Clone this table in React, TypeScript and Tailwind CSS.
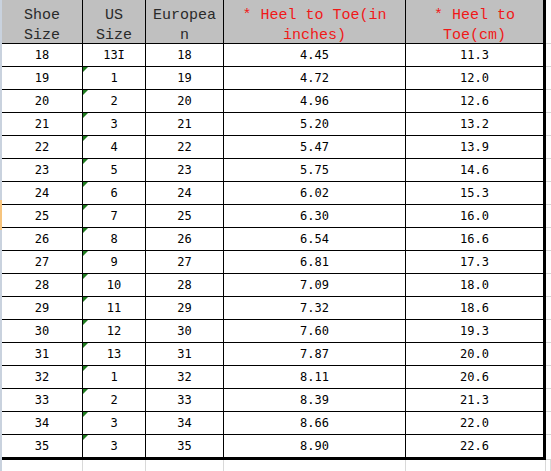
const rows: Array<[string, string, string, string, string]> = [
  ["18", "13I", "18", "4.45", "11.3"],
  ["19", "1", "19", "4.72", "12.0"],
  ["20", "2", "20", "4.96", "12.6"],
  ["21", "3", "21", "5.20", "13.2"],
  ["22", "4", "22", "5.47", "13.9"],
  ["23", "5", "23", "5.75", "14.6"],
  ["24", "6", "24", "6.02", "15.3"],
  ["25", "7", "25", "6.30", "16.0"],
  ["26", "8", "26", "6.54", "16.6"],
  ["27", "9", "27", "6.81", "17.3"],
  ["28", "10", "28", "7.09", "18.0"],
  ["29", "11", "29", "7.32", "18.6"],
  ["30", "12", "30", "7.60", "19.3"],
  ["31", "13", "31", "7.87", "20.0"],
  ["32", "1", "32", "8.11", "20.6"],
  ["33", "2", "33", "8.39", "21.3"],
  ["34", "3", "34", "8.66", "22.0"],
  ["35", "3", "35", "8.90", "22.6"],
];

const headers = [
  { lines: ["Shoe", "Size"], red: false },
  { lines: ["US", "Size"], red: false },
  { lines: ["Europea", "n"], red: false },
  { lines: ["* Heel to Toe(in", "inches)"], red: true },
  { lines: ["* Heel to", "Toe(cm)"], red: true },
];

function GreenMark() {
  return (
    <svg className="absolute left-0 top-0" width="5" height="5" viewBox="0 0 5 5">
      <polygon points="0,0 5,0 0,5" fill="#1e7b1e" />
    </svg>
  );
}

export default function App() {
  return (
    <div className="flex h-[471px] w-[551px] overflow-hidden bg-white text-black">
      {/* row header edge */}
      <div className="flex w-[2px] flex-col">
        <div className="h-[200px] bg-[#c9d2de]" />
        <div className="h-[30px] bg-[#f6c47e]" />
        <div className="flex-1 bg-[#c9d2de]" />
      </div>

      <div className="flex flex-1 flex-col">
        <div className="h-[2px] bg-[#c9d2de]" />
        <div className="grid grid-cols-[81px_63px_78px_182px_140px_5px]">
          {headers.map((h, i) => (
            <div
              key={i}
              className={`flex h-[44px] flex-col items-center justify-center border-b border-black bg-[#c0c0c0] pt-[8px] font-['Liberation_Mono',monospace] text-[15px] leading-[20px] ${
                i === 4 ? "border-r-[3px]" : "border-r"
              } ${h.red ? "text-[#f01818]" : "text-[#2a2a2a]"}`}
            >
              {h.lines.map((l) => (
                <span key={l} className="whitespace-pre">
                  {l}
                </span>
              ))}
            </div>
          ))}
          <div className="h-[44px] border-b border-[#d4d4d4]" />

          {rows.map((r, ri) => {
            const last = ri === rows.length - 1;
            return [
              ...r.map((v, ci) => (
                <div
                  key={`${ri}-${ci}`}
                  className={`relative flex items-center justify-center border-black font-['DejaVu_Sans_Mono',monospace] text-[12px] ${
                    last ? "h-[25px] border-b-[3px]" : "h-[23px] border-b"
                  } ${ci === 4 ? "border-r-[3px]" : "border-r"}`}
                >
                  {ci === 1 && ri > 0 ? <GreenMark /> : null}
                  {v}
                </div>
              )),
              <div
                key={`${ri}-f`}
                className={`border-b border-[#d4d4d4] ${last ? "h-[25px]" : "h-[23px]"}`}
              />,
            ];
          })}

          {[0, 1, 2, 3, 4, 5].map((c) => (
            <div key={`b-${c}`} className="h-[12px] border-r border-[#d9d9d9]" />
          ))}
        </div>
      </div>
    </div>
  );
}
